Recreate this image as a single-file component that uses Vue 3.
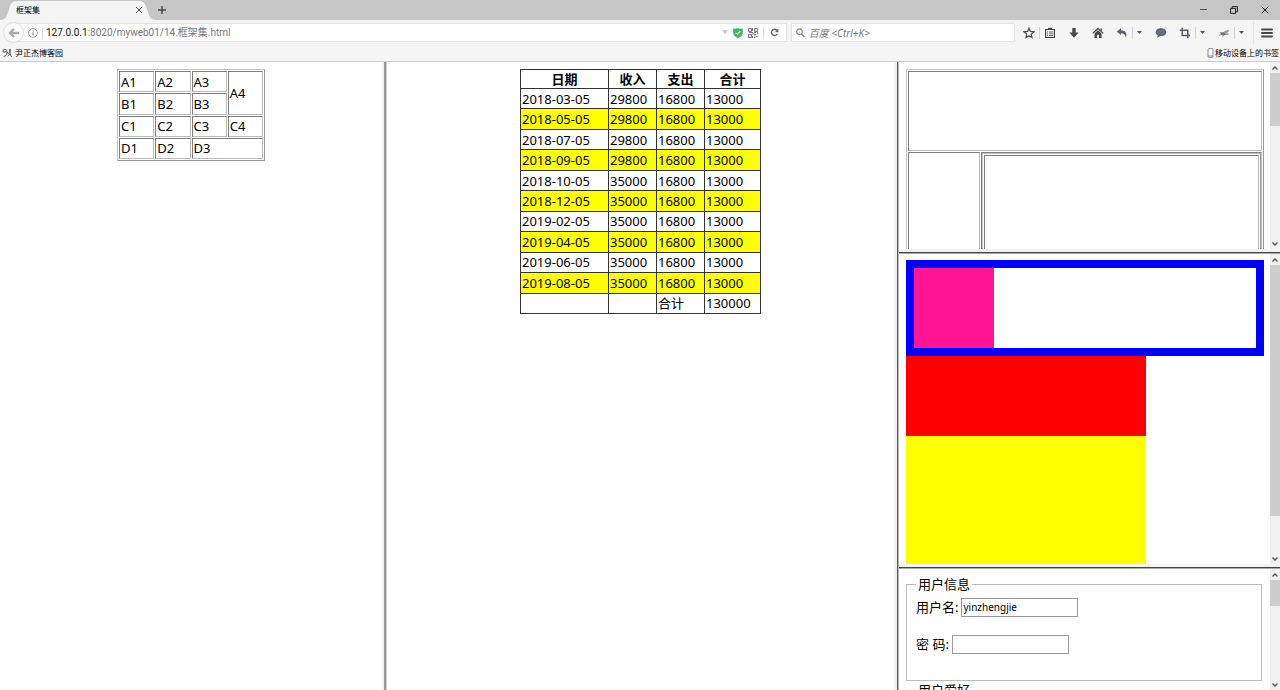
<script setup>
import { ref } from 'vue'

const username = ref('yinzhengjie')
const password = ref('')
const search = ref('')

const records = [
  ['2018-03-05', '29800', '16800', '13000'],
  ['2018-05-05', '29800', '16800', '13000'],
  ['2018-07-05', '29800', '16800', '13000'],
  ['2018-09-05', '29800', '16800', '13000'],
  ['2018-10-05', '35000', '16800', '13000'],
  ['2018-12-05', '35000', '16800', '13000'],
  ['2019-02-05', '35000', '16800', '13000'],
  ['2019-04-05', '35000', '16800', '13000'],
  ['2019-06-05', '35000', '16800', '13000'],
  ['2019-08-05', '35000', '16800', '13000'],
]
</script>

<template>
  <div class="browser">
    <header class="tabstrip">
      <div class="tab">
        <svg class="tab-shape" viewBox="0 0 160 20" preserveAspectRatio="none" aria-hidden="true">
          <path d="M0 20C6 20 7 16 9 10C11 4 12 1 18 1H142C148 1 149 4 151 10C153 16 154 20 160 20Z" fill="#f5f5f5" />
        </svg>
        <span class="tab-title">框架集</span>
        <button class="plain tab-close" aria-label="关闭标签页">
          <svg width="8" height="8" viewBox="0 0 8 8"><path d="M1 1L7 7M7 1L1 7" stroke="#555" fill="none" /></svg>
        </button>
      </div>
      <button class="plain new-tab" aria-label="新标签页">
        <svg width="10" height="10" viewBox="0 0 10 10"><path d="M5 1V9M1 5H9" stroke="#444" stroke-width="1.4" /></svg>
      </button>
      <div class="window-buttons">
        <button class="plain" aria-label="最小化">
          <svg width="8" height="8" viewBox="0 0 8 8"><path d="M1 3.5H8" stroke="#555" /></svg>
        </button>
        <button class="plain" aria-label="还原">
          <svg width="8" height="8" viewBox="0 0 8 8"><path d="M.6 2.4H5.6V7.4H.6ZM2.2 2.2V.6H7.4V5.8H5.8" stroke="#222" fill="none" /></svg>
        </button>
        <button class="plain" aria-label="关闭">
          <svg width="8" height="8" viewBox="0 0 8 8"><path d="M.7 .7L7.3 7.3M7.3 .7L.7 7.3" stroke="#222" fill="none" /></svg>
        </button>
      </div>
    </header>

    <nav class="navbar">
      <button class="back" aria-label="后退">
        <svg width="12" height="10" viewBox="0 0 12 10"><path d="M6 1L2 5L6 9M2.4 5H11" stroke="#aaa" stroke-width="2.4" fill="none" /></svg>
      </button>
      <div class="urlbar">
        <svg class="info" width="10" height="10" viewBox="0 0 10 10"><circle cx="5" cy="5" r="4.3" stroke="#888" stroke-width=".8" fill="none" /><path d="M5 4.3V7.6M5 2.4V3.4" stroke="#777" /></svg>
        <span class="url"><b>127.0.0.1</b>:8020/myweb01/14.框架集.html</span>
        <svg width="6" height="5" viewBox="0 0 6 5"><path d="M0 0H6L3 4.5Z" fill="#ccc" /></svg>
        <svg class="shield" width="10" height="10" viewBox="0 0 10 10"><path d="M.4 .8Q3 1.4 5 .2Q7 1.4 9.6 .8V5Q9 8.4 5 9.9Q1 8.4 .4 5Z" fill="#42b958" stroke="#45a9b5" stroke-width=".6" /><path d="M2.8 4.8L4.5 6.3L7.3 3.2" stroke="#fff" stroke-width="1.1" fill="none" /></svg>
        <svg class="qr" width="10" height="10" viewBox="0 0 10 10"><path d="M.5 .5H3.5V3.5H.5ZM6.5 .5H9.5V3.5H6.5ZM.5 6.5H3.5V9.5H.5Z" fill="none" stroke="#778" /><path d="M4.5 0V3M5 4.5H1M6 4.5H8M9.5 4V6M5 5V7M6 6.5H8M4.5 8V10M6 9.5H7.4M8 8.5H10M6 8H7.4" stroke="#778" /><path d="M1.6 2H2.4M7.6 2H8.4M1.6 8H2.4" stroke="#778" /></svg>
        <button class="plain reload" aria-label="重新加载">
          <svg width="9" height="9" viewBox="0 0 9 9"><path d="M7 2.4A3.1 3.1 0 1 0 7.4 5.8" stroke="#666" stroke-width="1.4" fill="none" /><path d="M8.4 .5V4.2H4.8Z" fill="#666" /></svg>
        </button>
      </div>
      <label class="searchbar">
        <svg width="9" height="10" viewBox="0 0 9 10"><circle cx="3.5" cy="3.7" r="2.8" stroke="#888" stroke-width="1.2" fill="none" /><path d="M5.4 5.8L8.4 9" stroke="#888" stroke-width="1.6" /></svg>
        <input v-model="search" type="text" placeholder="百度 <Ctrl+K>" aria-label="搜索" />
      </label>
      <div class="tools">
        <button class="plain" aria-label="收藏"><svg width="12" height="12" viewBox="0 0 12 12"><path d="M6 1.2L7.4 4.4L10.9 4.8L8.3 7.1L9 10.6L6 8.8L3 10.6L3.7 7.1L1.1 4.8L4.6 4.4Z" fill="none" stroke="#484848" stroke-width="1.2" /></svg></button>
        <button class="plain list" aria-label="书签列表"><svg width="12" height="12" viewBox="0 0 12 12"><path d="M1.6 2.5H10.4V10.5H1.6Z" fill="none" stroke="#484848" stroke-width="1.2" /><path d="M4 .8H8V2.6H4Z" fill="#484848" /><path d="M3 5H4M5 5H9M3 6.8H4M5 6.8H9M3 8.6H4M5 8.6H9" stroke="#484848" stroke-width=".8" /></svg></button>
        <button class="plain" aria-label="下载"><svg width="12" height="12" viewBox="0 0 12 12"><path d="M4.3 1H7.7V5.5H10.6L6 10.8L1.4 5.5H4.3Z" fill="#484848" /></svg></button>
        <button class="plain" aria-label="主页"><svg width="12" height="12" viewBox="0 0 12 12"><path d="M.8 6.4L6 1.5L11.2 6.4" fill="none" stroke="#484848" stroke-width="1.3" /><path d="M2.5 6.4L6 3.2L9.5 6.4V11H7V7.8H5V11H2.5ZM8.4 1.6H9.8V4.2L8.4 3Z" fill="#484848" /></svg></button>
        <button class="plain" aria-label="撤销"><svg width="12" height="12" viewBox="0 0 12 12"><path d="M.8 4.6L5 1.2V3.3C9.3 3.4 11.3 5.8 10 10.8C9.2 7.6 7.8 6.3 5 6.3V8.2Z" fill="#56677a" /></svg></button>
        <button class="plain arrow" aria-label="撤销选项"><svg width="5" height="3" viewBox="0 0 5 3"><path d="M0 0H5L2.5 3Z" fill="#555" /></svg></button>
        <button class="plain" aria-label="聊天"><svg width="12" height="12" viewBox="0 0 12 12"><path d="M6 1.2C9 1.2 11.3 2.8 11.3 5.2S9 9 6 9L5 8.9C4 10.2 3 10.6 1.9 10.6C2.5 9.8 2.8 9 2.7 8.2C1.4 7.5 .7 6.4 .7 5.2C.7 2.8 3 1.2 6 1.2Z" fill="#56677a" /><path d="M3 4.2H9M3 6.2H9" stroke="#74879a" stroke-width=".6" /></svg></button>
        <button class="plain" aria-label="截图"><svg width="12" height="12" viewBox="0 0 12 12"><path d="M3.2 .8V8.5H11.2M.8 3.2H8.8V11.2" fill="none" stroke="#4d5d70" stroke-width="1.5" /></svg></button>
        <button class="plain arrow" aria-label="截图选项"><svg width="5" height="3" viewBox="0 0 5 3"><path d="M0 0H5L2.5 3Z" fill="#555" /></svg></button>
        <button class="plain" aria-label="调试"><svg width="12" height="12" viewBox="0 0 12 12"><path d="M1 8.5L3.4 7.4M1.8 5.2L4.4 6.2M4.5 10L5.5 8" stroke="#999" stroke-width=".8" /><ellipse cx="5" cy="6.8" rx="2.6" ry="1.7" fill="#777" /><ellipse cx="8.3" cy="4.7" rx="2.8" ry="1.3" transform="rotate(-25 8.3 4.7)" fill="#999" /><path d="M6 7.5L10.5 7" stroke="#666" /></svg></button>
        <button class="plain arrow" aria-label="调试选项"><svg width="5" height="3" viewBox="0 0 5 3"><path d="M0 0H5L2.5 3Z" fill="#555" /></svg></button>
        <button class="plain menu" aria-label="菜单"><svg width="12" height="10" viewBox="0 0 12 10"><path d="M1 1.5H11M1 5H11M1 8.5H11" stroke="#484848" stroke-width="1.8" stroke-linecap="round" /></svg></button>
      </div>
    </nav>

    <div class="bookmarks">
      <a href="#">
        <svg width="10" height="10" viewBox="0 0 10 10"><path d="M4.6 2C3 .8 .8 1.6 1 3.2C1.2 4.8 3.8 4.6 4.8 2.6C5.4 5.4 4.4 8.2 1.6 8.6M5.6 4.2C5.4 6 7.2 6 7.8 4.4L8 1C7.6 4.8 8.2 7 9.6 8.8M7.9 6.2L5.6 8" fill="none" stroke="#555" stroke-width="1" /></svg>
        <span>尹正杰博客园</span>
      </a>
      <a href="#">
        <svg width="7" height="10" viewBox="0 0 7 10"><rect x="1" y=".6" width="5" height="8.8" rx="1" fill="#fff" stroke="#889" /><path d="M1 8H6" stroke="#889" /></svg>
        <span>移动设备上的书签</span>
      </a>
    </div>

    <main class="frames">
      <section class="frame padded">
        <table class="etched grid-table">
          <tbody>
            <tr><td>A1</td><td>A2</td><td>A3</td><td rowspan="2">A4</td></tr>
            <tr><td>B1</td><td>B2</td><td>B3</td></tr>
            <tr><td>C1</td><td>C2</td><td>C3</td><td>C4</td></tr>
            <tr><td>D1</td><td>D2</td><td colspan="2">D3</td></tr>
          </tbody>
        </table>
      </section>
      <div class="split vertical soft"></div>
      <section class="frame padded">
        <table class="ledger">
          <thead>
            <tr><th class="date">日期</th><th class="sum">收入</th><th class="sum">支出</th><th>合计</th></tr>
          </thead>
          <tbody>
            <tr v-for="row in records" :key="row[0]">
              <td v-for="(cell, i) in row" :key="i">{{ cell }}</td>
            </tr>
            <tr><td></td><td></td><td>合计</td><td>130000</td></tr>
          </tbody>
        </table>
      </section>
      <div class="split vertical"></div>
      <div class="stack">
        <section class="frame scrolling">
          <div class="view">
            <table class="etched layout-table">
              <tbody>
                <tr><td class="banner" colspan="2"></td></tr>
                <tr>
                  <td class="side"></td>
                  <td><table class="etched inner"><tbody><tr><td></td></tr></tbody></table></td>
                </tr>
              </tbody>
            </table>
          </div>
          <div class="scrollbar">
            <button class="plain" aria-label="向上滚动"><svg width="6" height="4" viewBox="0 0 6 4"><path d="M.5 3.5L3 1L5.5 3.5" /></svg></button>
            <div class="track"><div class="thumb short"></div></div>
            <button class="plain" aria-label="向下滚动"><svg width="6" height="4" viewBox="0 0 6 4"><path d="M.5 .5L3 3L5.5 .5" /></svg></button>
          </div>
        </section>
        <div class="split horizontal"></div>
        <section class="frame scrolling">
          <div class="view">
            <div class="blue-box"><div class="pink-box"></div></div>
            <div class="red-box"></div>
            <div class="yellow-box"></div>
          </div>
          <div class="scrollbar">
            <button class="plain" aria-label="向上滚动"><svg width="6" height="4" viewBox="0 0 6 4"><path d="M.5 3.5L3 1L5.5 3.5" /></svg></button>
            <div class="track"><div class="thumb long"></div></div>
            <button class="plain" aria-label="向下滚动"><svg width="6" height="4" viewBox="0 0 6 4"><path d="M.5 .5L3 3L5.5 .5" /></svg></button>
          </div>
        </section>
        <div class="split horizontal"></div>
        <section class="frame scrolling">
          <form class="view" @submit.prevent>
            <fieldset>
              <legend>用户信息</legend>
              <p><label for="user">用户名:</label> <input id="user" v-model="username" type="text" /></p>
              <p><label for="pass">密 码:</label> <input id="pass" v-model="password" type="password" /></p>
            </fieldset>
            <fieldset>
              <legend>用户爱好</legend>
            </fieldset>
          </form>
          <div class="scrollbar">
            <button class="plain" aria-label="向上滚动"><svg width="6" height="4" viewBox="0 0 6 4"><path d="M.5 3.5L3 1L5.5 3.5" /></svg></button>
            <div class="track"><div class="thumb tiny"></div></div>
            <button class="plain" aria-label="向下滚动"><svg width="6" height="4" viewBox="0 0 6 4"><path d="M.5 .5L3 3L5.5 .5" /></svg></button>
          </div>
        </section>
      </div>
    </main>
  </div>
</template>

<style>
body { margin: 0; overflow: hidden; }
</style>

<style scoped>
* { box-sizing: border-box; }
.browser {
  display: flex;
  flex-direction: column;
  height: 100vh;
  background: #fff;
  color: #000;
  font: 13px/18px "Noto Sans", "Noto Sans CJK SC", sans-serif;
}
svg { display: block; flex: none; }
.plain {
  display: flex;
  align-items: center;
  justify-content: center;
  padding: 0;
  border: 0;
  background: none;
}

.tabstrip { display: flex; flex: none; height: 20px; background: #c6c6c6; }
.tab { position: relative; display: flex; align-items: center; width: 156px; padding: 0 12px 0 16px; font-size: 8px; }
.tab-shape { position: absolute; inset: 0; width: 100%; height: 100%; }
.tab-title { position: relative; flex: 1; }
.tab-close { position: relative; width: 10px; height: 20px; }
.new-tab { width: 12px; height: 20px; }
.window-buttons { display: flex; gap: 22px; margin-left: auto; padding-right: 11px; }
.window-buttons .plain { width: 9px; }

.navbar { display: flex; flex: none; align-items: center; height: 25px; background: #f5f5f5; }
.back {
  z-index: 1;
  display: flex;
  align-items: center;
  justify-content: center;
  width: 21px;
  height: 21px;
  margin-left: 3px;
  padding: 0;
  border: 1px solid #ddd;
  border-radius: 50%;
  background: #fafafa;
}
.urlbar {
  display: flex;
  flex: 764 1 0;
  align-items: center;
  height: 19px;
  margin-left: -8px;
  padding-left: 11px;
  border: 1px solid #e4e4e4;
  background: #fff;
  font: 10px/12px Roboto, "Noto Sans CJK SC", sans-serif;
  color: #777;
}
.url { flex: 1; margin-left: 4px; padding-left: 3px; border-left: 1px solid #ddd; }
.url b { font-weight: 400; color: #111; }
.shield { margin-left: 5px; }
.qr { margin: 0 5px; }
.reload { width: 23px; height: 12px; border-left: 1px solid #ddd; }
.searchbar {
  display: flex;
  flex: 220 1 0;
  align-items: center;
  gap: 4px;
  height: 19px;
  margin-left: 4px;
  padding-left: 4px;
  border: 1px solid #e4e4e4;
  background: #fff;
}
.searchbar input {
  flex: 1;
  min-width: 0;
  padding: 0;
  border: 0;
  outline: 0;
  background: none;
  font: italic 10px/14px "Noto Sans", "Noto Sans CJK SC", sans-serif;
}
.searchbar input::placeholder { color: #777; opacity: 1; }
.tools { display: flex; flex: none; align-items: center; gap: 12px; margin-left: 8px; }
.tools .list { margin-left: -8px; padding-left: 4px; border-left: 1px solid #d4d4d4; }
.tools .arrow { width: 10px; height: 12px; margin: 0 1px 0 -8px; padding-left: 4px; border-left: 1px solid #d4d4d4; }
.tools .menu { width: 27px; height: 23px; margin-left: -4px; border-left: 1px solid #e2e2e2; }

.bookmarks {
  display: flex;
  flex: none;
  justify-content: space-between;
  height: 17px;
  padding: 0 1px 0 2px;
  border-bottom: 1px solid #ccc;
  background: #f5f5f5;
  font-size: 8px;
  line-height: 16px;
}
.bookmarks a { display: flex; align-items: center; gap: 3px; color: #000; text-decoration: none; }
.bookmarks a + a { gap: 1px; }

.frames { display: grid; flex: 1; grid-template-columns: 382fr 5px 507fr 5px 381fr; min-height: 0; }
.stack { display: grid; grid-template-rows: 187fr 5px 310fr 5px 121fr; min-width: 0; min-height: 0; }
.frame { min-width: 0; min-height: 0; overflow: hidden; }
.padded { padding-top: 7px; }
.split.vertical { border: solid; border-width: 0 1px 0 3px; border-color: #f3f3f3; border-right-color: #bbb; background: #555; }
.split.vertical.soft { border-left-width: 2px; border-right-color: #ccc; background: #999; }
.split.horizontal { border: solid; border-width: 3px 0 1px; border-color: #f3f3f3; border-bottom-color: #aaa; background: #444; }

.etched { border: 1px solid; border-color: #c4c4c4 #999 #999 #c4c4c4; border-spacing: 1px; }
.etched td { padding: 0 1px; border: 1px solid; border-color: #808080 #bbb #bbb #808080; }
.grid-table { width: 148px; height: 92px; margin: 0 auto; table-layout: fixed; }

.ledger { width: 241px; height: 245px; margin: 0 auto; border-collapse: collapse; table-layout: fixed; }
.ledger th, .ledger td { padding: 0 1px; border: 1px solid #333; }
.ledger .date { width: 88px; }
.ledger .sum { width: 48px; }
.ledger tbody tr:nth-child(even) { background: #ff0; }

.scrolling { display: flex; }
.view { flex: 1; min-width: 0; padding: 6px 6px 0 7px; overflow: hidden; }
.scrollbar { display: flex; flex: none; flex-direction: column; width: 10px; background: #f0f0f0; }
.scrollbar .plain { height: 11px; }
.scrollbar path { fill: none; stroke: #555; stroke-width: 1.4; }
.track { flex: 1; }
.thumb { background: #cdcdcd; }
.short { height: 32%; }
.long { height: 87%; }
.tiny { height: 26%; }

.layout-table { width: 100%; margin-top: 1px; }
.layout-table td { padding: 0; }
.layout-table .banner { height: 80px; }
.layout-table .side { width: 72px; }
.inner { width: 100%; height: 240px; }

.blue-box { border: 8px solid #00f; }
.pink-box { width: 80px; height: 80px; background: #ff1493; }
.red-box { width: 240px; height: 80px; background: #f00; }
.yellow-box { width: 240px; height: 160px; background: #ff0; }

fieldset { height: 106px; margin: 0 2px 0 0; padding: 5px 9px; border: 1px solid #bbb; }
legend { padding: 0 2px; }
fieldset p { display: flex; align-items: center; gap: 3px; height: 18px; margin: 0 0 19px; }
fieldset input {
  width: 117px;
  height: 19px;
  padding: 0 1px;
  border: 1px solid #999;
  background: #fff;
  font: 10px/15px "Noto Sans", "Noto Sans CJK SC", sans-serif;
}
</style>
